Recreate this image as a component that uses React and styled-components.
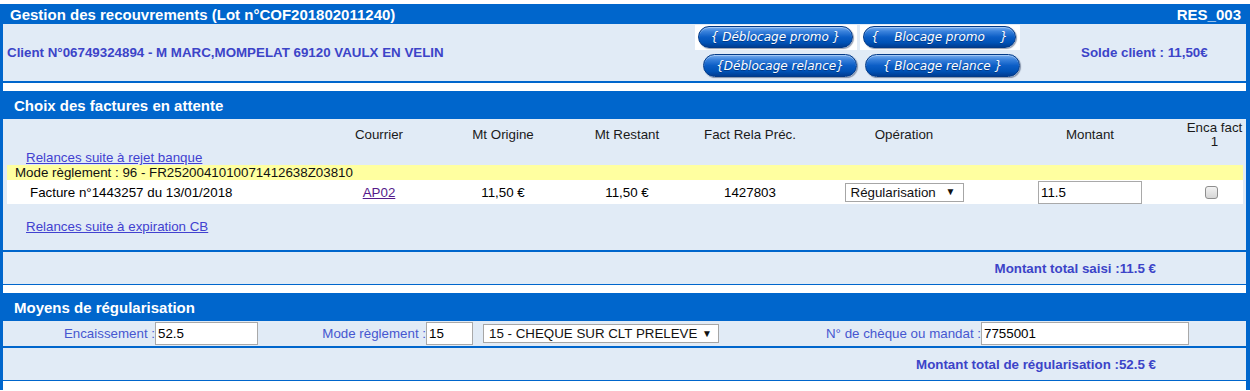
import React from "react";
import styled, { createGlobalStyle } from "styled-components";

const BLUE = "#0066cc";
const LIGHT = "#e1ebf6";
const INK = "#3c44c8";
const FS = "13.33px";

const GlobalStyle = createGlobalStyle`
  html, body { margin: 0; padding: 0; background: #fff; }
  body {
    font-family: "Liberation Sans", Arial, Helvetica, sans-serif;
    font-size: ${FS};
    color: #000;
  }
  * { box-sizing: border-box; }
`;

const Frame = styled.div`
  width: 1250px;
  margin-top: 4px;
  padding-bottom: 9px;
  border-left: 3px solid ${BLUE};
  border-right: 4px solid ${BLUE};
  display: flex;
  flex-direction: column;
  gap: 8px;
`;

const Section = styled.section`
  display: flex;
  flex-direction: column;
`;

const SectionHead = styled.div`
  height: ${(p) => p.$h}px;
  background: ${BLUE};
  color: #fff;
  font-weight: bold;
  font-size: 15px;
  display: flex;
  align-items: center;
  justify-content: space-between;
  padding: 0 5px 0 ${(p) => p.$pl}px;
`;

const Panel = styled.div`
  background: ${LIGHT};
  border-bottom: ${(p) => p.$line || 0}px solid ${BLUE};
`;

/* ---------- Section 1 ---------- */
const ClientBar = styled(Panel)`
  height: 59px;
  display: grid;
  grid-template-columns: 692px 327px 1fr;
  align-items: center;
`;

const BoldInk = styled.div`
  color: ${INK};
  font-weight: bold;
  font-size: ${FS};
  padding-left: ${(p) => p.$pl || 0}px;
`;

const ButtonStack = styled.div`
  align-self: start;
  padding-top: 1px;
  display: flex;
  flex-direction: column;
  gap: 4px;
`;

const ButtonRow = styled.div`
  display: flex;
  gap: ${(p) => p.$gap}px;
  padding-left: ${(p) => p.$pl || 0}px;
`;

const WhiteFrame = styled.div`
  background: #fff;
  padding: 1px 4px 2px 3px;
`;

const Pill = styled.button`
  width: ${(p) => p.$w}px;
  height: ${(p) => p.$h}px;
  border-radius: 12px;
  border: 1px solid #023a88;
  background: linear-gradient(
    to bottom,
    #78aef0 0%,
    #3a82dc 22%,
    #0c5ec6 50%,
    #0052b6 78%,
    #003d92 100%
  );
  box-shadow: 1px 1px 1px rgba(20, 40, 80, 0.45),
    inset 0 1px 0 rgba(255, 255, 255, 0.35);
  color: #fff;
  font-family: "DejaVu Sans", Verdana, sans-serif;
  font-style: italic;
  font-size: ${(p) => p.$fs}px;
  white-space: pre;
  padding: 0;
  display: flex;
  align-items: center;
  justify-content: center;
  text-shadow: 0 1px 0 rgba(0, 30, 90, 0.5);
  cursor: pointer;
`;

/* ---------- Section 2 ---------- */
const COLS = "313px 118px 130px 118px 128px 180px 192px 57px";

const InvoiceBody = styled(Panel)`
  padding: 0 3px 0 4px;
`;

const HeadRow = styled.div`
  height: 31px;
  display: grid;
  grid-template-columns: ${COLS};
  align-items: center;
  text-align: center;
  color: #1a1a1a;
  line-height: 14px;
`;

const LinkLine = styled.div`
  height: ${(p) => p.$h}px;
  padding: ${(p) => p.$pt || 0}px 0 0 19px;
  line-height: 15px;
`;

const TextLink = styled.a`
  color: ${(p) => (p.$visited ? "#551a8b" : "#4141d0")};
  text-decoration: underline;
  cursor: pointer;
`;

const ModeRow = styled.div`
  height: 15px;
  line-height: 15px;
  background: #ffffa0;
  padding-left: 8px;
  color: #111;
`;

const InvoiceRow = styled.div`
  height: 24px;
  background: #fff;
  display: grid;
  grid-template-columns: ${COLS};
  align-items: center;
  text-align: center;
`;

const Cell = styled.div`
  display: flex;
  justify-content: ${(p) => p.$justify || "center"};
  padding-left: ${(p) => p.$pl || 0}px;
`;

const FakeSelect = styled.div`
  width: ${(p) => p.$w}px;
  height: ${(p) => p.$h}px;
  background: #fff;
  border: 1px solid #a6a6a6;
  display: flex;
  align-items: center;
  justify-content: space-between;
  padding: 0 ${(p) => p.$pr}px 0 5px;
  font-size: ${FS};
  color: #111;
  flex: none;
  white-space: nowrap;
`;

const Arrow = styled.span`
  font-size: 10px;
  line-height: 1;
  margin-left: 4px;
`;

const TextInput = styled.input`
  width: ${(p) => p.$w}px;
  height: ${(p) => p.$h || 23}px;
  border: 1px solid #a9a9a9;
  background: #fff;
  font-family: "Liberation Sans", Arial, sans-serif;
  font-size: ${FS};
  color: #000;
  padding: 0 2px;
  margin: 0;
  outline: none;
  flex: none;
`;

const CheckBox = styled.span`
  width: 13px;
  height: 13px;
  border: 1px solid #8e8e8e;
  border-radius: 3px;
  background: linear-gradient(to bottom, #f2f2f2, #d6d6d6);
  margin-right: 6px;
`;

const Summary = styled(Panel)`
  height: ${(p) => p.$h}px;
  display: flex;
  align-items: center;
  justify-content: flex-end;
  padding-right: 90px;
  color: ${INK};
  font-weight: bold;
  font-size: ${FS};
`;

/* ---------- Section 3 ---------- */
const FormRow = styled(Panel)`
  height: 27px;
  display: flex;
  align-items: center;
`;

const FieldLabel = styled.label`
  width: ${(p) => p.$w}px;
  text-align: right;
  color: #4657d0;
  font-size: ${FS};
  flex: none;
`;

const Spacer = styled.span`
  width: ${(p) => p.$w}px;
  flex: none;
`;

export default function App() {
  return (
    <>
      <GlobalStyle />
      <Frame>
        <Section>
          <SectionHead $h={20} $pl={7}>
            <span>Gestion des recouvrements (Lot n°COF201802011240)</span>
            <span>RES_003</span>
          </SectionHead>
          <ClientBar $line={2}>
            <BoldInk $pl={4}>
              Client N°06749324894 - M MARC,MOMPELAT 69120 VAULX EN VELIN
            </BoldInk>
            <ButtonStack>
              <ButtonRow $gap={3}>
                <WhiteFrame>
                  <Pill $w={155} $h={22} $fs={12}>{"{ Déblocage promo }"}</Pill>
                </WhiteFrame>
                <WhiteFrame>
                  <Pill $w={153} $h={22} $fs={12}>{"{    Blocage promo    }"}</Pill>
                </WhiteFrame>
              </ButtonRow>
              <ButtonRow $gap={8} $pl={8}>
                <Pill $w={154} $h={23} $fs={12}>{"{Déblocage relance}"}</Pill>
                <Pill $w={155} $h={23} $fs={12}>{"{ Blocage relance }"}</Pill>
              </ButtonRow>
            </ButtonStack>
            <BoldInk $pl={59}>Solde client : 11,50€</BoldInk>
          </ClientBar>
        </Section>

        <Section>
          <SectionHead $h={28} $pl={11}>
            <span>Choix des factures en attente</span>
          </SectionHead>
          <InvoiceBody $line={2}>
            <HeadRow>
              <span />
              <span>Courrier</span>
              <span>Mt Origine</span>
              <span>Mt Restant</span>
              <span>Fact Rela Préc.</span>
              <span>Opération</span>
              <span>Montant</span>
              <span>
                Enca fact
                <br />1
              </span>
            </HeadRow>
            <LinkLine $h={15}>
              <TextLink>Relances suite à rejet banque</TextLink>
            </LinkLine>
            <ModeRow>Mode règlement : 96 - FR2520041010071412638Z03810</ModeRow>
            <InvoiceRow>
              <Cell $justify="flex-start" $pl={23}>
                Facture n°1443257 du 13/01/2018
              </Cell>
              <Cell>
                <TextLink $visited>AP02</TextLink>
              </Cell>
              <Cell>11,50 €</Cell>
              <Cell>11,50 €</Cell>
              <Cell>1427803</Cell>
              <Cell>
                <FakeSelect $w={119} $h={19} $pr={7}>
                  <span>Régularisation</span>
                  <Arrow>▼</Arrow>
                </FakeSelect>
              </Cell>
              <Cell>
                <TextInput $w={104} defaultValue="11.5" />
              </Cell>
              <Cell>
                <CheckBox />
              </Cell>
            </InvoiceRow>
            <LinkLine $h={46} $pt={15}>
              <TextLink>Relances suite à expiration CB</TextLink>
            </LinkLine>
          </InvoiceBody>
          <Summary $h={33} $line={1}>
            Montant total saisi :11.5 €
          </Summary>
        </Section>

        <Section>
          <SectionHead $h={28} $pl={11}>
            <span>Moyens de régularisation</span>
          </SectionHead>
          <FormRow $line={2}>
            <FieldLabel $w={152}>Encaissement :</FieldLabel>
            <TextInput $w={103} defaultValue="52.5" />
            <FieldLabel $w={168}>Mode règlement :</FieldLabel>
            <TextInput $w={47} defaultValue="15" />
            <Spacer $w={10} />
            <FakeSelect $w={236} $h={19} $pr={6}>
              <span>15 - CHEQUE SUR CLT PRELEVE</span>
              <Arrow>▼</Arrow>
            </FakeSelect>
            <FieldLabel $w={262}>N° de chèque ou mandat :</FieldLabel>
            <TextInput $w={208} defaultValue="7755001" />
          </FormRow>
          <Summary $h={33} $line={1}>
            Montant total de régularisation :52.5 €
          </Summary>
        </Section>
      </Frame>
    </>
  );
}
